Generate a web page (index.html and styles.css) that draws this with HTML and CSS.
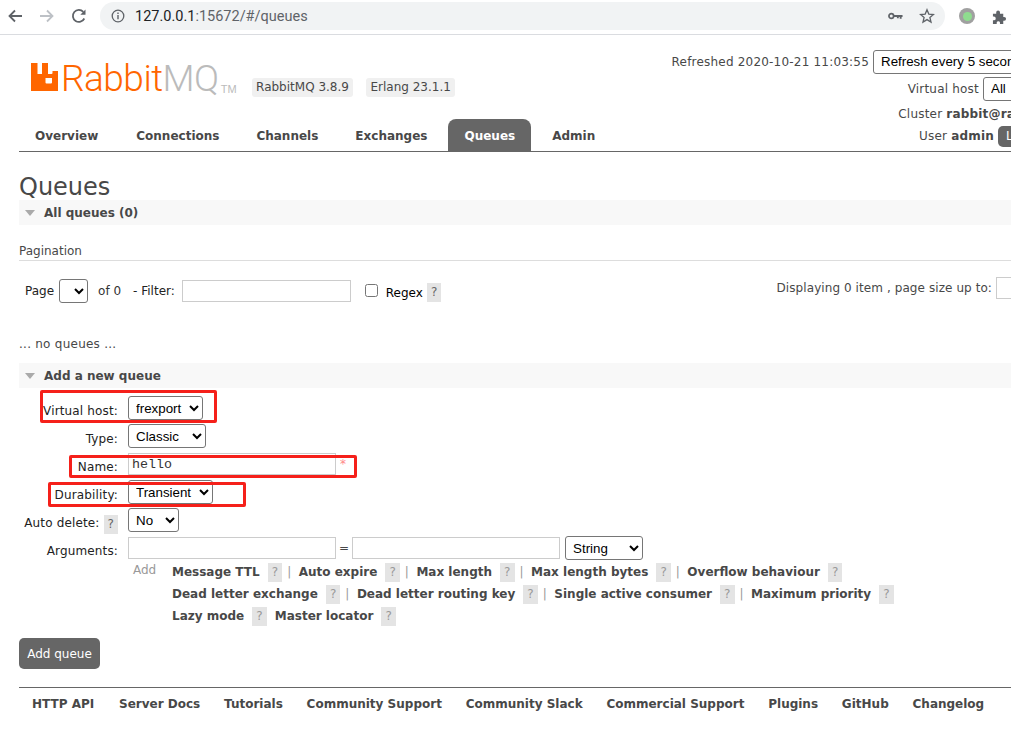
FILE: index.html
```html
<!DOCTYPE html>
<html lang="en">
<head>
    <meta charset="UTF-8">
    <meta name="viewport" content="width=device-width, initial-scale=1.0">
    <title>RabbitMQ Management</title>
    <link rel="stylesheet" href="styles.css">
</head>
<body>
    <div class="browser-bar">
        <svg class="nav-icon" viewBox="0 0 16 16"><path d="M15 8H3M8 2.500 2.500 8 8 13.500" fill="none" stroke="#5f6368" stroke-width="1.800"/></svg>
        <svg class="nav-icon" viewBox="0 0 16 16"><path d="M1 8h12M8 2.500 13.500 8 8 13.500" fill="none" stroke="#bdc1c6" stroke-width="1.800"/></svg>
        <svg class="nav-icon" viewBox="0 0 16 16"><path d="M13.300 10.500A6 6 0 1 1 12.300 3.800" fill="none" stroke="#5f6368" stroke-width="1.800"/><path d="M14.500 1.500v5.200H9.300z" fill="#5f6368"/></svg>
        <div class="address">
            <svg class="info-icon" viewBox="0 0 14 14"><circle cx="7" cy="7" r="5.800" fill="none" stroke="#5f6368" stroke-width="1.300"/><path d="M6.300 6h1.400v4.200H6.300zM6.300 3.600h1.400V5H6.300z" fill="#5f6368"/></svg>
            <span class="url"><span class="url-host">127.0.0.1</span>:15672/#/queues</span>
            <svg class="key-icon" viewBox="0 0 16 8"><circle cx="3.500" cy="4" r="2.500" fill="none" stroke="#5f6368" stroke-width="1.800"/><path d="M6 3h9.500v2h-1v2h-2V5h-1v1.500h-2V5H6z" fill="#5f6368"/></svg>
            <svg class="star-icon" viewBox="0 0 16 16"><path d="M8 1.800l1.800 4.300 4.700.4-3.600 3 1.100 4.600L8 11.600l-4 2.500 1.100-4.600-3.600-3 4.700-.4z" fill="none" stroke="#5f6368" stroke-width="1.300"/></svg>
        </div>
        <div class="ext-dot"><span></span></div>
        <svg class="puzzle-icon" viewBox="0 0 16 16"><path d="M1 5h3.500V3.500a2 2 0 0 1 4 0V5H12v3.500h1a2 2 0 0 1 0 4h-1V16H8.500v-1.500a1.800 1.800 0 0 0-3.500 0V16H1v-4h1a2 2 0 0 0 0-4H1z" fill="#5f6368"/></svg>
    </div>

    <div class="page">
        <div class="header">
            <div class="brand">
                <svg class="logo-mark" viewBox="0 0 27 28"><path d="M0 0h6.500v11H11V0h6v11h3.500a1 1 0 0 0 1-1V8H27v20H0zM14.500 15v4.500a1 1 0 0 0 1 1H20a1 1 0 0 0 1-1V15z" fill="#f60" fill-rule="evenodd"/></svg>
                <span class="logo-word">Rabbit<span class="logo-mq">MQ</span></span>
                <span class="logo-tm">TM</span>
                <span class="version first">RabbitMQ 3.8.9</span>
                <span class="version">Erlang 23.1.1</span>
            </div>
            <div class="status">
                <div class="status-row">Refreshed 2020-10-21 11:03:55 <select class="top-select refresh"><option>Refresh every 5 seconds</option></select></div>
                <div class="status-row">Virtual host <select class="top-select vhost"><option>All</option></select></div>
                <div class="status-row tight">Cluster <b>rabbit@rabbit</b></div>
                <div class="status-row tight">User <b>admin</b> <button class="logout">Log out</button></div>
            </div>
        </div>

        <ul class="tabs">
            <li>Overview</li>
            <li>Connections</li>
            <li>Channels</li>
            <li>Exchanges</li>
            <li class="active">Queues</li>
            <li>Admin</li>
        </ul>

        <h1>Queues</h1>
        <div class="section-title"><span class="arrow"></span>All queues (0)</div>

        <h3 class="pagination-title">Pagination</h3>
        <div class="pagination-bar">
            <div class="pagination-left">
                <span class="page-label">Page</span>
                <select class="page-select"><option></option></select>
                <span class="of-label">of 0</span>
                <span class="filter-label">- Filter:</span>
                <input class="filter-input" type="text">
                <input class="regex-check" type="checkbox">
                <span class="regex-label">Regex</span>
                <span class="help dark">?</span>
            </div>
            <div class="pagination-right">Displaying 0 item , page size up to: <input class="size-input" type="text"></div>
        </div>

        <p class="no-queues">... no queues ...</p>

        <div class="section-title add-title"><span class="arrow"></span>Add a new queue</div>

        <div class="form">
            <div class="form-row">
                <label>Virtual host:</label>
                <select class="form-select w-vhost"><option>frexport</option></select>
            </div>
            <div class="form-row">
                <label>Type:</label>
                <select class="form-select w-type"><option>Classic</option></select>
            </div>
            <div class="form-row">
                <label>Name:</label>
                <input class="text-input name-input" type="text" value="hello">
                <span class="required">*</span>
            </div>
            <div class="form-row">
                <label>Durability:</label>
                <select class="form-select w-durability"><option>Transient</option></select>
            </div>
            <div class="form-row">
                <label>Auto delete: <span class="help dark">?</span></label>
                <select class="form-select w-auto"><option>No</option></select>
            </div>
            <div class="form-row">
                <label>Arguments:</label>
                <input class="text-input" type="text">
                <span class="equals">=</span>
                <input class="text-input" type="text">
                <select class="form-select type-select"><option>String</option></select>
            </div>
            <div class="add-args">
                <span class="add-label">Add</span>
                <div class="arg-lines">
                    <div><b>Message TTL</b><span class="help">?</span><i>|</i><b>Auto expire</b><span class="help">?</span><i>|</i><b>Max length</b><span class="help">?</span><i>|</i><b>Max length bytes</b><span class="help">?</span><i>|</i><b>Overflow behaviour</b><span class="help">?</span></div>
                    <div><b>Dead letter exchange</b><span class="help">?</span><i>|</i><b>Dead letter routing key</b><span class="help">?</span><i>|</i><b>Single active consumer</b><span class="help">?</span><i>|</i><b>Maximum priority</b><span class="help">?</span></div>
                    <div><b>Lazy mode</b><span class="help">?</span><b class="next">Master locator</b><span class="help">?</span></div>
                </div>
            </div>
        </div>

        <button class="add-queue">Add queue</button>

        <ul class="footer-links">
            <li>HTTP API</li>
            <li>Server Docs</li>
            <li>Tutorials</li>
            <li>Community Support</li>
            <li>Community Slack</li>
            <li>Commercial Support</li>
            <li>Plugins</li>
            <li>GitHub</li>
            <li>Changelog</li>
        </ul>
    </div>

    <!-- red boxes someone drew on top of the screenshot -->
    <div class="mark mark-vhost"></div>
    <div class="mark mark-name"></div>
    <div class="mark mark-durability"></div>
</body>
</html>
```

FILE: styles.css
```css
html,
body {
    margin: 0;
    padding: 0;
    width: 1011px;
    height: 744px;
    overflow: hidden;
    background-color: #fff;
}

body {
    position: relative;
    font-family: "DejaVu Sans", Verdana, sans-serif;
    font-size: 12px;
    color: #484848;
}

/* browser toolbar */
.browser-bar {
    display: flex;
    align-items: center;
    height: 32px;
    padding: 0 0 2px 7px;
    border-bottom: 1px solid #dadce0;
    overflow: hidden;
}

.nav-icon {
    width: 16px;
    height: 16px;
    margin-right: 16px;
    flex: none;
}

.address {
    display: flex;
    align-items: center;
    width: 845px;
    height: 28px;
    margin-left: -3px;
    border-radius: 14px;
    background-color: #f1f3f4;
    flex: none;
    padding-left: 11px;
    box-sizing: border-box;
}

.info-icon {
    width: 14px;
    height: 14px;
    margin-right: 10px;
    flex: none;
}

.url {
    font-family: Roboto, "Liberation Sans", sans-serif;
    font-size: 14.500px;
    color: #5f6368;
    flex: 1;
}

.url-host {
    color: #202124;
}

.key-icon {
    width: 15px;
    height: 8px;
    margin-right: 16px;
}

.star-icon {
    width: 16px;
    height: 16px;
    margin-right: 10px;
}

.ext-dot {
    width: 16px;
    height: 16px;
    border-radius: 50%;
    background-color: #a0a0a0;
    display: flex;
    align-items: center;
    justify-content: center;
    margin-left: 14px;
    flex: none;
}

.ext-dot span {
    width: 9px;
    height: 9px;
    border-radius: 50%;
    background-color: #8fdc8f;
}

.puzzle-icon {
    width: 15px;
    height: 15px;
    margin-left: 17px;
    flex: none;
}

/* page */
.page {
    width: 1024px;
    padding-left: 19px;
}

.header {
    display: flex;
    justify-content: space-between;
    height: 85px;
}

.brand {
    display: flex;
    align-items: flex-start;
    padding: 28px 0 0 12px;
}

.logo-mark {
    width: 27px;
    height: 28px;
    flex: none;
}

.logo-word {
    font-family: Roboto, "Liberation Sans", sans-serif;
    font-weight: 300;
    font-size: 37px;
    line-height: 31px;
    letter-spacing: -0.5px;
    color: #f60;
    margin-left: 3px;
}

.logo-mq {
    color: #bbb;
}

.logo-tm {
    font-family: "Liberation Sans", sans-serif;
    font-size: 11px;
    color: #bbb;
    margin: 20px 0 0 2px;
}

.version {
    background-color: #f0f0f0;
    border-radius: 3px;
    padding: 0 4.500px;
    height: 19px;
    line-height: 19px;
    margin: 15px 0 0 12.500px;
    white-space: nowrap;
}

.version.first {
    margin-left: 15px;
}

.status {
    padding-top: 14px;
}

.status-row {
    text-align: right;
    white-space: nowrap;
    line-height: 27px;
    height: 27px;
    letter-spacing: 0.2px;
}

.status-row.tight {
    height: 22px;
    line-height: 22px;
}

.top-select {
    font-family: "Liberation Sans", Arial, sans-serif;
    font-size: 13.333px;
    letter-spacing: normal;
    height: 24px;
    margin-top: -2px;
    padding-left: 3px;
    background-color: #fff;
    color: #000;
    border: 1px solid #767676;
    border-radius: 3px;
    vertical-align: middle;
}

.refresh {
    width: 170px;
}

.vhost {
    width: 60px;
}

.logout {
    font-family: inherit;
    font-size: 12px;
    background-color: #666;
    color: #fff;
    border: none;
    border-radius: 5px;
    width: 45px;
    height: 21px;
    padding: 0 0 0 8px;
    text-align: left;
    white-space: nowrap;
    overflow: hidden;
}

.tabs {
    display: flex;
    list-style-type: none;
    margin: -1px 0 0 0;
    padding: 0;
    height: 32px;
    border-bottom: 1px solid #666;
}

.tabs li {
    font-weight: bold;
    line-height: 34px;
    padding: 0 16px;
    margin-right: 5px;
    border-radius: 8px 8px 0 0;
}

.tabs li:first-child {
    margin-right: 6px;
}

.tabs li.active {
    background-color: #666;
    color: #fff;
}

h1 {
    font-size: 24px;
    font-weight: normal;
    line-height: 30px;
    height: 28px;
    margin: 20px 0 0 0;
}

.section-title {
    display: flex;
    align-items: center;
    height: 25px;
    background-color: #f8f8f8;
    font-weight: bold;
    font-size: 12px;
}

.arrow {
    width: 0;
    height: 0;
    border-left: 5.500px solid transparent;
    border-right: 5.500px solid transparent;
    border-top: 6px solid #aaa;
    margin: 0 9px 0 6px;
}

.pagination-title {
    font-size: 12px;
    font-weight: normal;
    line-height: 15px;
    margin: 19px 0 0 0;
    padding-bottom: 1px;
    border-bottom: 1px solid #ddd;
}

.pagination-bar {
    display: flex;
    justify-content: space-between;
    margin-top: 18px;
    height: 24px;
}

.pagination-left {
    display: flex;
    align-items: center;
    color: #000;
}

.page-label {
    margin: 0 5px 0 6px;
    color: #222;
}

.page-select {
    width: 29px;
    height: 24px;
    background-color: #fff;
    border: 1px solid #767676;
    border-radius: 3px;
}

.of-label {
    margin: -1px 0 0 10px;
    color: #333;
}

.filter-label {
    margin: -1px 6px 0 12px;
    color: #222;
}

.filter-input {
    width: 169px;
    height: 22px;
    box-sizing: border-box;
    border: 1px solid #ccc;
    margin: 0 0 0 1px;
}

.regex-check {
    width: 13px;
    height: 13px;
    margin: 0 0 2px 14px;
}

.regex-label {
    margin: 3px 4px 0 8px;
}

.help {
    display: inline-block;
    width: 14.500px;
    height: 19px;
    line-height: 19px;
    text-align: center;
    font-size: 12px;
    font-weight: normal;
    background-color: #e4e4e4;
    color: #999;
    margin: 0 8px;
    vertical-align: middle;
}

.help.dark {
    color: #666;
    margin: 2px 0 0 0;
}

.pagination-right {
    display: flex;
    align-items: center;
    gap: 4px;
    white-space: nowrap;
    letter-spacing: 0.08px;
    margin-top: -7px;
}

.size-input {
    width: 47px;
    height: 22px;
    box-sizing: border-box;
    border: 1px solid #ccc;
}

.no-queues {
    margin: 34px 0 0 0;
    line-height: 15px;
    letter-spacing: 0.25px;
}

.add-title {
    margin-top: 11px;
}

.form {
    margin-top: 6px;
}

.form-row {
    display: flex;
    align-items: center;
    height: 28px;
}

.form-row label {
    width: 99px;
    margin-right: 10px;
    text-align: right;
    color: #222;
    white-space: nowrap;
    flex: none;
    padding-top: 6px;
    letter-spacing: 0.15px;
}

.form-select {
    font-family: "Liberation Sans", Arial, sans-serif;
    font-size: 13.333px;
    height: 24px;
    padding-left: 3px;
    background-color: #fff;
    color: #000;
    border: 1px solid #767676;
    border-radius: 3px;
}

.w-vhost {
    width: 75px;
}

.w-type {
    width: 78px;
}

.w-durability {
    width: 85px;
}

.w-auto {
    width: 51px;
}

.text-input {
    width: 208px;
    height: 22px;
    box-sizing: border-box;
    border: 1px solid #ccc;
    margin: 0;
}

.name-input {
    font-family: "Liberation Mono", monospace;
    font-size: 13.333px;
    padding: 0 3px;
    color: #333;
}

.required {
    color: #f88;
    margin-left: 4px;
}

.equals {
    margin: 0 3px;
}

.type-select {
    width: 78px;
    margin-left: 5px;
}

.add-args {
    display: flex;
    align-items: flex-start;
    padding-left: 114px;
    margin-top: -1px;
}

.add-label {
    color: #999;
    width: 39px;
    flex: none;
    line-height: 22px;
    margin-top: -2px;
}

.arg-lines div {
    height: 22px;
    line-height: 22px;
    white-space: nowrap;
}

.arg-lines i {
    font-style: normal;
    color: #999;
    margin-right: 7.500px;
    margin-left: -3px;
}

.add-queue {
    display: block;
    font-family: inherit;
    font-size: 12px;
    background-color: #666;
    color: #fff;
    border: none;
    border-radius: 5px;
    width: 81px;
    height: 31px;
    padding: 0;
    margin-top: 11px;
}

.footer-links {
    display: flex;
    list-style-type: none;
    margin: 18px 0 0 0;
    padding: 0 0 0 13px;
    border-top: 1px solid #666;
    gap: 23.800px;
}

.footer-links li {
    font-weight: bold;
    line-height: 33px;
    white-space: nowrap;
}

.footer-links li:first-child {
    margin-right: 1px;
}

/* annotations over the screenshot */
.mark {
    position: absolute;
    border: 3px solid #f5201a;
    border-radius: 2px;
    box-sizing: border-box;
}

.mark-vhost {
    left: 40px;
    top: 390px;
    width: 177px;
    height: 33px;
}

.mark-name {
    left: 69px;
    top: 455px;
    width: 288px;
    height: 23px;
}

.mark-durability {
    left: 48px;
    top: 482px;
    width: 198px;
    height: 25px;
}
```
